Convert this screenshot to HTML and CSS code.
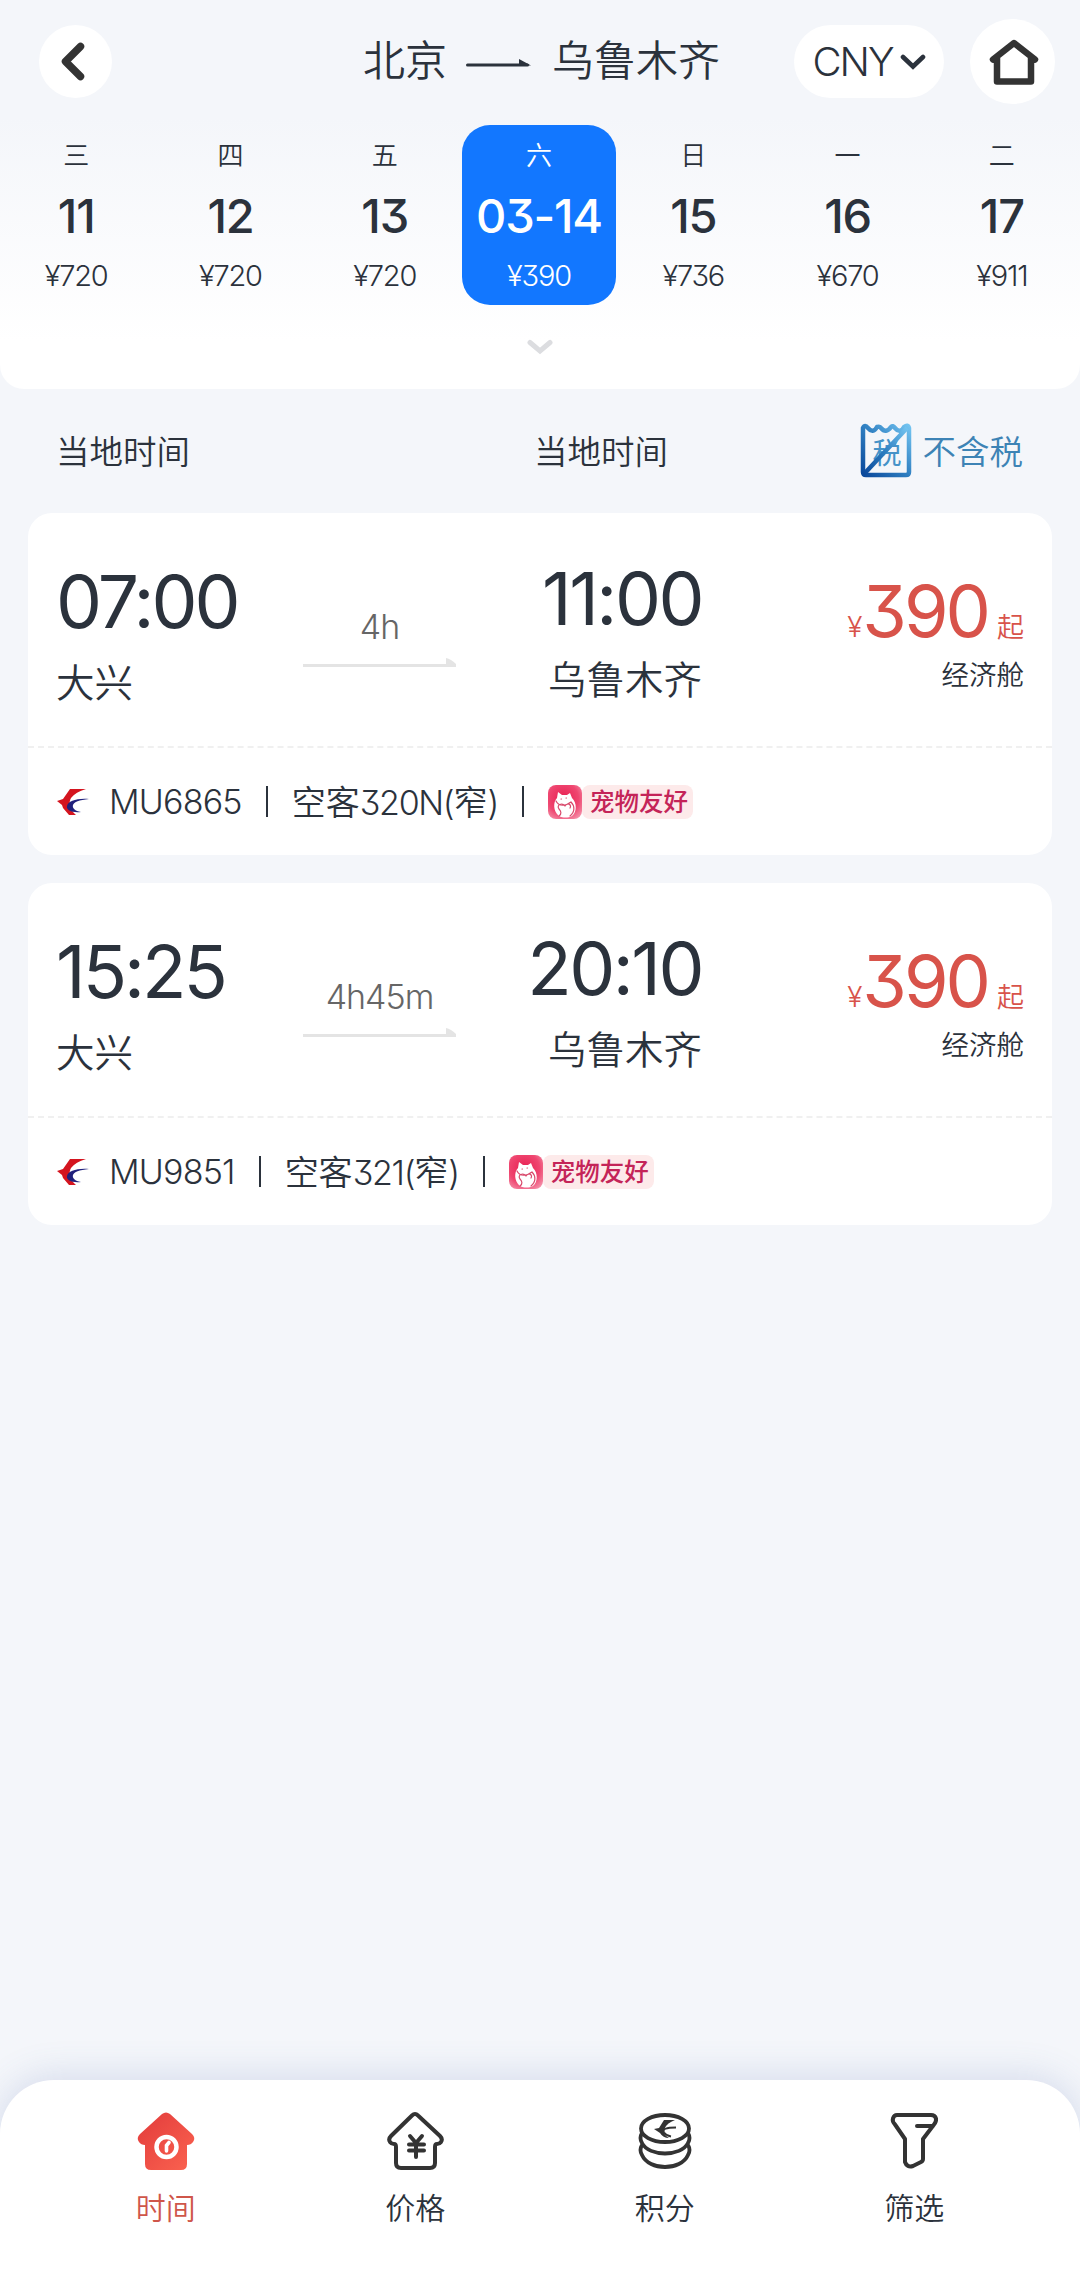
FILE: index.html
```html
<!DOCTYPE html>
<html lang="zh-CN">
<head>
  <meta charset="UTF-8" />
  <meta name="viewport" content="width=device-width, initial-scale=1.0"/>
  <title>北京 - 乌鲁木齐</title>
  <link rel="stylesheet" href="styles.css">
</head>
<body>

  <!-- shared icons -->
  <svg class="sprite" width="0" height="0">
    <symbol id="airline" viewBox="0 0 34 28">
      <path d="M14 1h16c-7 2-12 5-15 9-3 5-1 12 5 17h-7L7 20l-1-3-5-4 6-2z" fill="#d4141f"/>
      <path d="M33 11c-10 1-15 3-16 6-1 3 2 6 8 7-9 1-15-2-14-6 1-5 10-8 22-7z" fill="#20207c"/>
    </symbol>
    <symbol id="pet" viewBox="0 0 34 34">
      <rect width="34" height="34" rx="8" fill="url(#petFill)"/>
      <path d="M11 31C5 26 5 17 9 13L10 7l4 3h5l3-2 2 5c5 5 5 14 0 18-4 2-9 2-13 0z" fill="#fff"/>
      <path d="M8 16c3 6 10 5 15 1 4 4 4 10-1 14M11 31c3-2 2-5 0-7-3-4 3-7 6-3 3-4 7-1 5 2M13 14h.5M18 13h.5" fill="none" stroke="#d94a6c" stroke-width="1.200" stroke-linecap="round"/>
    </symbol>
    <defs>
      <radialGradient id="petFill" cx=".45" cy=".4" r=".75">
        <stop offset="0" stop-color="#e81e50"/>
        <stop offset=".6" stop-color="#ef4670"/>
        <stop offset="1" stop-color="#f59bb2"/>
      </radialGradient>
      <linearGradient id="taxLine" x1="0" y1="1" x2="1" y2="0">
        <stop offset="0" stop-color="#0a489b"/>
        <stop offset=".5" stop-color="#2f7fc1"/>
        <stop offset="1" stop-color="#72c3f0"/>
      </linearGradient>
      <linearGradient id="homeRed" x1="0" y1="0" x2="1" y2="1">
        <stop offset="0" stop-color="#e23b3b"/>
        <stop offset="1" stop-color="#fb6350"/>
      </linearGradient>
    </defs>
  </svg>

  <header class="header">
    <div class="topbar">
      <button class="round-btn">
        <svg width="73" height="73" viewBox="0 0 73 73"><path d="M41.500 21.500L26.500 36.500l15 15" fill="none" stroke="#333" stroke-width="7.500" stroke-linecap="round" stroke-linejoin="round"/></svg>
      </button>
      <h1 class="route">
        <span>北京</span>
        <svg width="66" height="10" viewBox="0 0 66 10"><path d="M1.500 7h60" stroke="#2b323c" stroke-width="3" stroke-linecap="round"/><path d="M53 1l12 6.500H53z" fill="#2b323c"/></svg>
        <span>乌鲁木齐</span>
      </h1>
      <button class="currency">
        <span>CNY</span>
        <svg width="26" height="18" viewBox="0 0 26 18"><path d="M3 4l10 9.500L23 4" fill="none" stroke="#2b323c" stroke-width="4.600" stroke-linecap="round"/></svg>
      </button>
      <button class="round-btn home">
        <svg width="50" height="48" viewBox="0 0 50 48"><path d="M4 21.500L25 5l21 16.500M8 19.500V43.500H42V19.500" fill="none" stroke="#333" stroke-width="6.500" stroke-linecap="round" stroke-linejoin="round"/></svg>
      </button>
    </div>

    <div class="dates">
      <div class="date"><span class="week">三</span><span class="day">11</span><span class="fare">¥720</span></div>
      <div class="date"><span class="week">四</span><span class="day">12</span><span class="fare">¥720</span></div>
      <div class="date"><span class="week">五</span><span class="day">13</span><span class="fare">¥720</span></div>
      <div class="date active"><span class="week">六</span><span class="day">03-14</span><span class="fare">¥390</span></div>
      <div class="date"><span class="week">日</span><span class="day">15</span><span class="fare">¥736</span></div>
      <div class="date"><span class="week">一</span><span class="day">16</span><span class="fare">¥670</span></div>
      <div class="date"><span class="week">二</span><span class="day">17</span><span class="fare">¥911</span></div>
    </div>

    <svg class="expand" width="26" height="16" viewBox="0 0 26 16"><path d="M3 3.500l10 8.500 10-8.500" fill="none" stroke="#dcdde0" stroke-width="5" stroke-linecap="round"/></svg>
  </header>

  <div class="labels">
    <span>当地时间</span>
    <span class="arrive">当地时间</span>
    <span class="tax">
      <svg width="52" height="55" viewBox="0 0 52 55">
        <path d="M3 5Q5 1 8 5Q13 11 17 4Q20 3 21 5Q26 11 31 4Q33 2 35 5Q40 11 44 4Q48 1 49 5V49Q49 52 46 52H6Q3 52 3 49Z" fill="none" stroke="url(#taxLine)" stroke-width="4.500"/>
        <text x="12.500" y="41" font-size="29" font-weight="400" fill="#4592c8">税</text>
        <path d="M4 51L47 5" stroke="url(#taxLine)" stroke-width="4.500"/>
      </svg>
      不含税
    </span>
  </div>

  <main class="flights">
    <section class="card">
      <div class="trip">
        <div class="depart">
          <div class="time">07:00</div>
          <div class="airport">大兴</div>
        </div>
        <div class="duration">
          <span>4h</span>
          <svg width="153" height="9" viewBox="0 0 153 9"><path d="M0 6h143V0q5 1 10 6v3H0z" fill="#e4e4e4"/></svg>
        </div>
        <div class="arrival">
          <div class="time">11:00</div>
          <div class="airport">乌鲁木齐</div>
        </div>
        <div class="price">
          <div class="amount"><small>¥</small><b>390</b><i>起</i></div>
          <div class="cabin">经济舱</div>
        </div>
      </div>
      <div class="detail">
        <svg class="logo" width="34" height="28"><use href="#airline"/></svg>
        <span class="flight-no">MU6865</span>
        <span class="bar"></span>
        <span class="plane">空客<span>320N(</span>窄<span>)</span></span>
        <span class="bar"></span>
        <span class="pet"><svg width="34" height="34"><use href="#pet"/></svg><em>宠物友好</em></span>
      </div>
    </section>

    <section class="card">
      <div class="trip">
        <div class="depart">
          <div class="time">15:25</div>
          <div class="airport">大兴</div>
        </div>
        <div class="duration">
          <span>4h45m</span>
          <svg width="153" height="9" viewBox="0 0 153 9"><path d="M0 6h143V0q5 1 10 6v3H0z" fill="#e4e4e4"/></svg>
        </div>
        <div class="arrival">
          <div class="time">20:10</div>
          <div class="airport">乌鲁木齐</div>
        </div>
        <div class="price">
          <div class="amount"><small>¥</small><b>390</b><i>起</i></div>
          <div class="cabin">经济舱</div>
        </div>
      </div>
      <div class="detail">
        <svg class="logo" width="34" height="28"><use href="#airline"/></svg>
        <span class="flight-no">MU9851</span>
        <span class="bar"></span>
        <span class="plane">空客<span>321(</span>窄<span>)</span></span>
        <span class="bar"></span>
        <span class="pet"><svg width="34" height="34"><use href="#pet"/></svg><em>宠物友好</em></span>
      </div>
    </section>
  </main>

  <nav class="tabbar">
    <div class="tab active">
      <svg width="60" height="60" viewBox="0 0 60 60">
        <path d="M26 3q4-3 8 0l22 20q4 4 1 8-2 3-6 3v19q0 6-6 6H15q-6 0-6-6V34q-4 0-6-3-3-4 1-8z" fill="url(#homeRed)"/>
        <circle cx="30.500" cy="36" r="10" fill="none" stroke="#fff" stroke-width="4.500"/>
        <path d="M30.500 40v-5.500l2.500-3" fill="none" stroke="#fff" stroke-width="3.600" stroke-linecap="round"/>
      </svg>
      <span>时间</span>
    </div>
    <div class="tab">
      <svg width="60" height="60" viewBox="0 0 60 60" fill="none" stroke="#333" stroke-width="4" stroke-linecap="round" stroke-linejoin="round">
        <path d="M27 4.500q3-3 6 0l22 20.500q3 3 1 6-1.500 2-4 2-2 0-2 3v16q0 5-5 5H16q-5 0-5-5V36q0-3-2-3-2.500 0-4-2-2-3 1-6z"/>
        <path d="M25 25l6 7 6-7M31 32v14M24 33.500h15M24 39.500h15"/>
      </svg>
      <span>价格</span>
    </div>
    <div class="tab">
      <svg width="60" height="60" viewBox="0 0 60 60" fill="none" stroke="#333" stroke-width="3.800">
        <ellipse cx="30" cy="17.500" rx="24" ry="13.500"/>
        <path d="M7 22q-3 5 0 10c7 14 39 14 46 0q3-5 0-10"/>
        <path d="M7 34q-3 5 0 10c7 16 39 16 46 0q3-5 0-10"/>
        <path d="M29 9h11q-8 3-10 8-3 6 4 10-6 0-9-5l-6-4 5-1z" fill="#333" stroke="none"/>
        <path d="M41 16.500q-15 0-12 5 2 3 7 4" stroke-width="1.800"/>
      </svg>
      <span>积分</span>
    </div>
    <div class="tab">
      <svg width="60" height="60" viewBox="0 0 60 60" fill="none" stroke="#333" stroke-width="4" stroke-linecap="round" stroke-linejoin="round">
        <path d="M13 4H47q4 0 5 3.500 .500 3-2 6L39 28V48q0 2-2 3l-8 4q-6 2-8-4V28L11 13.500q-3-3-2-6 1-3.500 4-3.500zM33 15h16"/>
      </svg>
      <span>筛选</span>
    </div>
  </nav>

</body>
</html>
```
FILE: styles.css
```css
* {
  box-sizing: border-box;
}

body {
  margin: 0;
  min-height: 2271px;
  display: flex;
  flex-direction: column;
  background: #f4f6fa;
  color: #2b323c;
  font-family: Inter, "Noto Sans CJK SC", sans-serif;
  font-feature-settings: "cv09";
  font-weight: 350;
}

.sprite {
  position: absolute;
}

svg {
  display: block;
  flex-shrink: 0;
}

button {
  border: none;
  padding: 0;
  background: #fff;
  color: inherit;
  font: inherit;
}

/* header */
.header {
  height: 389px;
  border-radius: 0 0 24px 24px;
  background: linear-gradient(#f4f6fa 30%, #fff 88%);
}

.topbar {
  height: 125px;
  padding: 20px 25px 0 39px;
  display: flex;
  align-items: flex-start;
}

.round-btn {
  width: 73px;
  height: 73px;
  margin-top: 5px;
  border-radius: 50%;
}

.home {
  width: 85px;
  height: 85px;
  margin: -1px 0 0 26px;
  padding: 0 0 0 3px;
  display: flex;
  align-items: center;
  justify-content: center;
}

.route {
  flex: 1;
  margin: 11px 0 0 251px;
  display: flex;
  align-items: center;
  font-size: 42px;
  font-weight: 350;
  line-height: 60px;
}

.route svg {
  margin: 3px 20px 0 19px;
}

.currency {
  width: 150px;
  height: 73px;
  margin-top: 5px;
  border-radius: 37px;
  display: flex;
  align-items: center;
  justify-content: center;
  gap: 7px;
  font-size: 40px;
  letter-spacing: -2px;
}

.dates {
  display: grid;
  grid-template-columns: repeat(7, 1fr);
  margin: 0 1px 0 -1px;
}

.date {
  height: 180px;
  padding-top: 11px;
  border-radius: 28px;
  display: flex;
  flex-direction: column;
  align-items: center;
}

.week {
  font-size: 26px;
  line-height: 40px;
}

.day {
  font-size: 47px;
  font-weight: 450;
  line-height: 60px;
  margin-top: 10px;
  letter-spacing: -1.2px;
}

.fare {
  font-size: 29px;
  line-height: 40px;
  margin-top: 10px;
  letter-spacing: -1.2px;
}

.date.active {
  background: #1277ff;
  color: #fff;
}

.expand {
  margin: 34px auto 0;
}

/* column labels */
.labels {
  height: 124px;
  padding: 0 57px 3px 56px;
  display: flex;
  align-items: center;
  font-size: 33.5px;
}

.arrive {
  margin-left: 344px;
}

.tax {
  margin-left: auto;
  display: flex;
  align-items: center;
  gap: 11px;
  color: #3d83b5;
}

.tax svg {
  margin-top: 2px;
}

/* flight cards */
.flights {
  padding: 0 28px;
  display: flex;
  flex-direction: column;
  gap: 28px;
}

.card {
  height: 342px;
  border-radius: 24px;
  background: #fff;
}

.trip {
  height: 235px;
  padding: 0 28px;
  display: grid;
  grid-template-columns: 217px 213px 216px 1fr;
  border-bottom: 2px dashed #f0f0f0;
}

.depart {
  padding-top: 49px;
}

.arrival {
  padding-top: 46px;
  justify-self: end;
  text-align: right;
}

.time {
  font-size: 73px;
  font-weight: 400;
  line-height: 80px;
  letter-spacing: -3px;
}

.arrival .time {
  letter-spacing: -2.5px;
}

.airport {
  font-size: 38.5px;
  line-height: 50px;
  margin-top: 16px;
}

.duration {
  padding-top: 91px;
  padding-left: 30px;
  width: 183px;
  display: flex;
  flex-direction: column;
  align-items: center;
  gap: 8px;
  font-size: 34px;
  font-weight: 300;
  line-height: 46px;
  letter-spacing: -1px;
  color: #666;
}

.price {
  padding-top: 58px;
  text-align: right;
}

.amount {
  height: 80px;
  line-height: 80px;
  color: #d8534a;
}

.amount small {
  font-size: 28px;
  margin-right: 0;
}

.amount b {
  font-size: 72px;
  font-weight: 370;
  letter-spacing: -3px;
}

.amount i {
  font-size: 27px;
  font-style: normal;
  margin-left: 9px;
}

.cabin {
  font-size: 27.5px;
  line-height: 40px;
  margin-top: 4px;
}

.detail {
  height: 107px;
  padding-left: 28px;
  display: flex;
  align-items: center;
  font-size: 34px;
}

.flight-no {
  margin-left: 19px;
  letter-spacing: -0.8px;
}

.plane {
  margin-top: -3px;
}

.plane span {
  letter-spacing: -1.3px;
}

.bar {
  width: 2px;
  height: 31px;
  margin: 0 24px;
  background: #2b323c;
}

.pet {
  display: flex;
  align-items: center;
}

.pet em {
  width: 111px;
  height: 34px;
  padding-left: 3px;
  border-radius: 8px;
  background: #fdeaea;
  color: #c42458;
  font-size: 24.5px;
  font-style: normal;
  font-weight: 500;
  line-height: 34px;
  text-align: center;
}

/* bottom tabs */
.tabbar {
  height: 191px;
  margin-top: auto;
  padding: 31px 41px 0;
  display: grid;
  grid-template-columns: repeat(4, 1fr);
  border-radius: 54px 54px 0 0;
  background: #fff;
  box-shadow: 0 -4px 36px rgba(70, 100, 170, 0.18);
}

.tab {
  display: flex;
  flex-direction: column;
  align-items: center;
  gap: 17px;
  font-size: 30px;
  line-height: 40px;
}

.tab.active {
  color: #cf564a;
}
```
